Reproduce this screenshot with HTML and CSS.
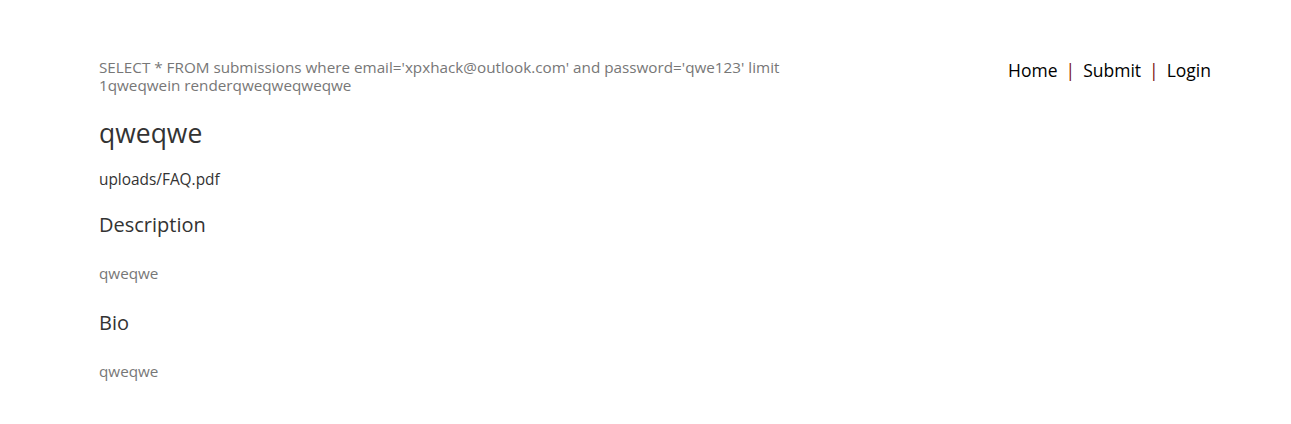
FILE: index.html
```html
<!DOCTYPE html>
<html>
<head>
<meta charset="utf-8">
<link rel="stylesheet" href="styles.css">
</head>
<body>
<div class="page">
  <div class="header">
    <div class="query">SELECT * FROM submissions where email='xpxhack@outlook.com' and password='qwe123' limit 1qweqwein renderqweqweqweqwe</div>
    <nav class="nav"><a href="#">Home</a><span class="sep">|</span><a href="#">Submit</a><span class="sep">|</span><a href="#">Login</a></nav>
  </div>
  <h1 class="title">qweqwe</h1>
  <p class="file">uploads/FAQ.pdf</p>
  <h3 class="section">Description</h3>
  <p class="text">qweqwe</p>
  <h3 class="section section-next">Bio</h3>
  <p class="text">qweqwe</p>
</div>
</body>
</html>
```

FILE: styles.css
```css
body {
  margin: 0;
  background: #fff;
  font-family: "Open Sans", "DejaVu Sans", sans-serif;
}
.page {
  padding: 58px 80px 0 99px;
}
.header {
  display: flex;
  justify-content: space-between;
  align-items: flex-start;
}
.query {
  width: 700px;
  font-size: 15.25px;
  line-height: 18px;
  color: #777;
}
.nav {
  font-size: 17.5px;
  line-height: 24px;
  color: #000;
}
.nav a {
  color: #000;
  text-decoration: none;
}
.sep {
  color: #7a1010;
  margin: 0 8px;
}
.title {
  margin: 21px 0 0;
  font-size: 26.5px;
  font-weight: normal;
  line-height: 36px;
  color: #333;
}
.file {
  margin: 19px 0 0;
  font-size: 15.4px;
  line-height: 20px;
  color: #333;
}
.section {
  margin: 22px 0 0;
  font-size: 20px;
  font-weight: normal;
  line-height: 26px;
  color: #333;
}
.section-next {
  margin-top: 27px;
}
.text {
  margin: 25px 0 0;
  font-size: 15.25px;
  line-height: 20px;
  color: #777;
}
```
